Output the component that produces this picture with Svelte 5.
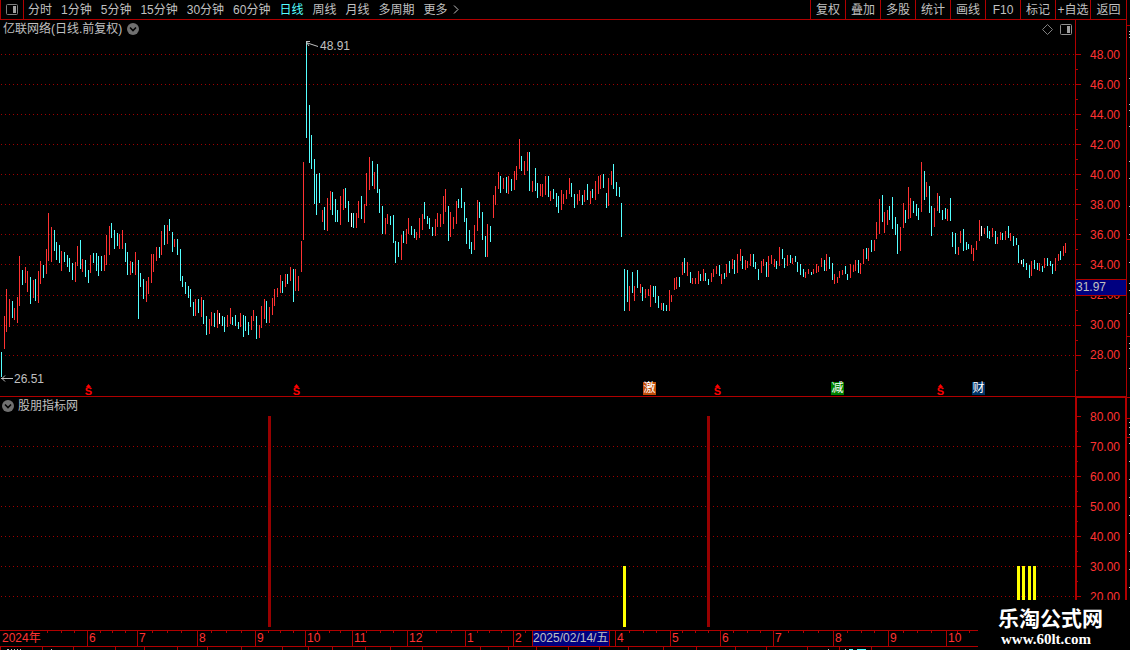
<script lang="ts">
	const periods = ["分时", "1分钟", "5分钟", "15分钟", "30分钟", "60分钟", "日线", "周线", "月线", "多周期", "更多"];
	const tools = ["复权", "叠加", "多股", "统计", "画线", "F10", "标记", "+自选", "返回"];
	let activePeriod = $state("日线");

	const PLOT_WIDTH = 1075;
	const left = (x: number) => (x / PLOT_WIDTH) * 100 + "%";

	// one bar per trading day: kind (r up, c down, w unchanged), x, high, low
	const raw = `
c1,352,377 r4,316,349 r6,289,332 r9,299,327 c12,301,318 r14,308,320 r17,297,323 r19,256,306 c22,270,285 r25,267,283
r27,271,292 c30,277,304 r33,280,298 c35,279,301 r38,271,303 r40,261,284 c43,265,278 r46,249,274 r48,213,261 r51,227,262
c54,230,251 c56,242,260 c59,245,263 r61,251,271 c64,252,262 c67,255,267 c69,258,272 c72,263,280 r75,262,282 r77,246,266
c80,240,269 r82,259,272 c85,260,277 c88,270,283 r90,255,273 c93,253,263 c96,253,271 c98,256,276 c101,256,271 r104,255,271
r106,235,265 r109,226,255 c111,223,238 c114,230,249 c117,233,246 r119,234,249 r122,230,249 c125,243,262 c127,252,275
r130,261,275 c132,262,273 r135,252,275 c138,260,319 c140,273,287 c143,279,299 r146,281,302 r148,277,294 r151,254,283
r153,254,272 r156,247,261 c159,247,258 r161,231,255 c164,225,245 r167,225,244 c169,219,231 c172,232,252 r174,239,247
c177,239,255 c180,249,281 c182,276,287 c185,282,294 c188,286,298 c190,289,307 c193,302,316 r195,299,316 c198,299,313
r201,297,317 c203,300,324 c206,316,335 r209,319,334 r211,312,326 c214,313,327 r217,310,328 w219,313,324 c222,316,326
c224,317,332 r227,315,327 r230,308,324 c232,317,325 c235,315,326 c238,322,329 r240,313,327 c243,315,337 c245,316,331
c248,322,335 r251,316,330 r253,310,321 c256,316,339 r259,325,338 r261,306,328 r264,299,319 c266,301,323 r269,307,323
r272,298,315 r274,289,306 r277,288,297 r280,275,293 c282,281,293 r285,274,287 c287,274,284 r290,267,281 c293,269,302
r295,269,291 r298,276,291 r301,241,272 r303,162,240 c306,41,138 c309,105,163 c311,135,169 c314,159,204 c316,174,215
c319,173,203 r322,210,222 c324,207,230 r327,198,231 r330,191,210 c332,192,215 c335,199,222 c337,210,222 r340,196,225
r343,189,210 c345,188,208 c348,201,222 w351,213,227 c353,213,228 r356,213,228 r358,201,218 c361,196,219 r364,204,223
r366,173,206 r369,157,190 c372,161,186 r374,172,189 c377,164,193 c379,189,213 c382,206,234 r385,218,234 r387,214,224
c390,216,225 c393,215,243 c395,241,263 c398,242,257 r401,235,260 c403,231,243 r406,229,244 r408,218,234 c411,226,235
c414,229,238 r416,232,240 r419,218,238 r422,214,230 c424,202,219 c427,216,224 c429,218,229 c432,227,236 r435,219,236
r437,213,227 r440,214,227 r443,196,224 r445,189,212 c448,206,241 r450,212,237 r453,217,229 r456,201,224 c458,199,208
c461,188,208 c464,202,222 c466,218,244 c469,230,249 c471,242,254 r474,225,250 r477,200,231 c479,202,218 c482,212,240
c485,236,257 r487,224,257 c490,226,242 r493,195,218 r495,186,205 r498,172,189 c500,176,193 r503,178,189 c506,177,193
r508,176,194 c511,179,191 r514,171,190 r516,166,180 r519,139,169 c521,156,171 r524,161,175 r527,152,171 c529,152,191
r532,181,192 c535,168,191 c537,183,198 r540,184,196 r542,184,197 r545,176,195 c548,176,197 r550,191,201 c553,189,199
c556,193,207 c558,196,213 r561,190,210 r563,194,204 r566,190,199 r569,178,194 c571,183,197 c574,194,208 r577,194,205
r579,190,201 c582,195,205 r584,190,202 c587,184,200 r590,191,204 c592,189,198 r595,181,200 r598,176,194 r600,175,189
c603,174,188 c606,193,208 r608,178,206 r611,171,185 c613,164,189 c616,182,196 c619,187,197 c621,203,237 c624,269,311
c627,270,302 r629,286,311 c632,272,293 r634,286,301 c637,270,288 r640,284,293 c642,287,301 r645,289,298 r648,289,296
r650,285,307 c653,286,297 c655,286,303 c658,296,308 r661,303,310 c663,303,311 c666,305,311 r669,290,311 r671,295,302
r674,278,290 r676,277,289 c679,277,287 r682,262,275 c684,258,273 r687,262,276 c690,272,283 r692,278,284 r695,278,284
r698,271,284 c700,274,281 r703,269,281 c705,273,281 c708,279,285 r711,273,282 r713,269,277 r716,266,274 c719,265,276
r721,274,284 c724,273,279 r726,264,277 c729,261,273 r732,259,269 c734,260,274 r737,254,273 r740,249,261 c742,256,269
r745,260,270 r747,261,268 r750,254,266 c753,254,267 c755,262,269 c758,269,280 r761,261,273 r763,259,266 c766,262,277
r768,256,277 r771,255,264 r774,259,267 c776,261,269 r779,247,266 c782,249,259 c784,258,268 r787,255,266 c790,255,263
r792,258,264 c795,256,262 c797,262,272 c800,264,275 c803,269,277 r805,272,278 r808,269,274 c811,272,275 r813,269,274
r816,264,273 r818,266,272 r821,258,267 c824,260,271 r826,254,271 c829,257,269 c832,263,280 r834,274,284 r837,277,283
r839,271,278 r842,270,275 c845,266,274 c847,274,280 r850,264,278 r853,265,272 r855,260,271 c858,260,273 r860,263,274
r863,249,264 c866,248,259 r868,248,261 c871,240,252 r874,240,251 r876,222,239 r879,199,234 c882,195,222 r884,212,233
r887,210,225 c889,206,220 c892,197,229 c895,217,235 c897,224,254 r900,227,251 r903,203,228 c905,210,223 r908,187,219
r910,198,218 c913,201,213 c916,204,216 c918,208,220 r921,162,212 c924,171,200 r926,182,197 c929,186,213 c931,206,236
r934,208,227 r937,193,211 c939,196,213 c942,210,220 c945,208,219 r947,209,221 c950,198,221 c952,232,247 c955,233,254
r958,247,255 r960,231,243 c963,229,251 c966,242,250 c968,244,249 r971,245,254 r973,248,261 r976,241,250 r979,220,241
w981,226,236 r984,228,234 c987,226,238 c989,231,239 r992,228,237 c995,231,244 r997,237,244 r1000,232,240 c1002,233,240
r1005,231,240 c1008,226,238 r1010,233,241 c1013,236,246 c1016,238,245 c1018,245,263 w1021,260,264 c1023,259,267
c1026,263,270 c1029,265,278 r1031,261,276 c1034,260,269 c1037,263,270 r1039,263,271 c1042,266,272 r1044,258,268
c1047,258,266 c1050,261,266 c1052,264,274 r1055,258,271 r1058,254,261 c1060,251,260 r1063,246,256 r1065,243,253`;
	const candles = raw
		.trim()
		.split(/\s+/)
		.map((item) => {
			const [x, high, low] = item.slice(1).split(",").map(Number);
			return { kind: item[0], x, high, low };
		});

	const priceLines = [54, 84, 114, 144, 174, 204, 234, 264, 295, 325, 355];
	const prices = ["48.00", "46.00", "44.00", "42.00", "40.00", "38.00", "36.00", "34.00", "32.00", "30.00", "28.00"];

	const levelLines = [416, 446, 476, 506, 536, 566, 596];
	const levels = ["80.00", "70.00", "60.00", "50.00", "40.00", "30.00", "20.00"];
	const signals = [
		{ x: 268, top: 416, color: "#980000" },
		{ x: 707, top: 416, color: "#980000" },
		{ x: 623, top: 566, color: "#ffff00" },
		{ x: 1017, top: 566, color: "#ffff00" },
		{ x: 1022, top: 566, color: "#ffff00" },
		{ x: 1028, top: 566, color: "#ffff00" },
		{ x: 1033, top: 566, color: "#ffff00" },
	];

	const dividends = [88, 296, 717, 940];
	const badges = [
		{ x: 643, text: "激", color: "#c04c08" },
		{ x: 831, text: "减", color: "#008000" },
		{ x: 972, text: "财", color: "#003468" },
	];

	const months = [
		{ x: 87, text: "6" },
		{ x: 137, text: "7" },
		{ x: 197, text: "8" },
		{ x: 255, text: "9" },
		{ x: 305, text: "10" },
		{ x: 352, text: "11" },
		{ x: 407, text: "12" },
		{ x: 465, text: "1" },
		{ x: 513, text: "2" },
		{ x: 615, text: "4" },
		{ x: 670, text: "5" },
		{ x: 720, text: "6" },
		{ x: 773, text: "7" },
		{ x: 833, text: "8" },
		{ x: 888, text: "9" },
		{ x: 946, text: "10" },
	];
	const weekTicks = [
		47, 61, 74, 100, 112, 125, 152, 167, 181, 211, 226, 241, 268, 280, 293, 317, 329, 340, 366, 380, 393, 422, 436,
		451, 477, 489, 501, 525, 629, 643, 656, 682, 695, 708, 733, 747, 760, 788, 803, 818, 847, 861, 874, 903, 917,
		931, 957, 969,
	];
	const tabEdges = [
		0, 42, 73, 115, 144, 177, 207, 241, 282, 308, 332, 365, 390, 422, 480, 508, 536, 568, 599, 628, 663, 696, 735,
		766, 807, 839, 871,
	];
	const sideLines = [25, 239, 336, 397, 418, 437];
	const sideMarks = [
		31, 34, 37, 78, 104, 110, 126, 161, 178, 206, 234, 262, 283, 290, 313, 343, 348, 368, 422, 427, 434, 443, 461,
		479, 497, 515, 533, 551, 569, 587,
	];
</script>

{#snippet collapseIcon()}
	<svg width="12" height="12" viewBox="0 0 12 12">
		<circle cx="6" cy="6" r="6" fill="#707070" />
		<path d="M3 4.5 6 7.5 9 4.5" fill="none" stroke="#000" stroke-width="1.6" />
	</svg>
{/snippet}

<div class="app">
	<div class="workspace">
		<header>
			<button class="panel-toggle" aria-label="侧栏">
				<svg width="12" height="11" viewBox="0 0 12 11">
					<rect x=".5" y=".5" width="11" height="10" rx="1" fill="none" stroke="#808080" />
					<rect x="7" y="2" width="3" height="7" fill="#a0a0a0" />
				</svg>
			</button>
			<nav>
				{#each periods as period}
					<button class:active={period === activePeriod} onclick={() => (activePeriod = period)}>{period}</button>
				{/each}
				<svg class="more" width="6" height="9" viewBox="0 0 6 9">
					<path d="M1 .5 5 4.5 1 8.5" fill="none" stroke="#c0c0c0" />
				</svg>
			</nav>
			<div class="tools">
				{#each tools as tool}
					<button>{tool}</button>
				{/each}
			</div>
		</header>

		<section class="row price">
			<div class="plot">
				<svg class="canvas" viewBox="0 20 1075 376" preserveAspectRatio="none" shape-rendering="crispEdges">
					{#each priceLines as y}
						<path class="grid" d="M1 {y + 0.5}H1075" />
					{/each}
					{#each candles as c}
						<rect class={c.kind} x={c.x} y={c.high} width="1" height={c.low - c.high} />
					{/each}
				</svg>
				<div class="title">
					<span>亿联网络(日线.前复权)</span>
					<button aria-label="展开">{@render collapseIcon()}</button>
				</div>
				<div class="corner">
					<button aria-label="标记">
						<svg width="11" height="11" viewBox="0 0 11 11">
							<path d="M5.5 .5 10.5 5.5 5.5 10.5 .5 5.5Z" fill="none" stroke="#808080" />
						</svg>
					</button>
					<button aria-label="分栏">
						<svg width="12" height="11" viewBox="0 0 12 11">
							<rect x=".5" y=".5" width="11" height="10" rx="1" fill="none" stroke="#909090" />
							<rect x="7" y="2" width="3" height="7" fill="#a0a0a0" />
						</svg>
					</button>
				</div>
				<div class="extreme high" style="left: {left(306)}">
					<svg width="12" height="7" viewBox="0 0 12 7">
						<path d="M0 1.5 12 5.5M0 6V1M0 .5H4M1 2 3 5" fill="none" stroke="#c0c0c0" />
					</svg>
					48.91
				</div>
				<div class="extreme low" style="left: {left(1)}">
					<svg width="12" height="7" viewBox="0 0 12 7">
						<path d="M0 3.5H12M4 .5 1 3.5 4 6.5" fill="none" stroke="#c0c0c0" />
					</svg>
					26.51
				</div>
				{#each dividends as x}
					<span class="dividend" style="left: {left(x)}">
						<svg width="5" height="3" viewBox="0 0 5 3"><path d="M2.5 0 5 3H0Z" fill="#f00" /></svg>
						<b>S</b>
					</span>
				{/each}
				{#each badges as badge}
					<span class="badge" style="left: {left(badge.x)}; background: {badge.color}">{badge.text}</span>
				{/each}
			</div>
			<div class="axis">
				<svg class="ticks" width="5" height="376" viewBox="0 20 5 376" shape-rendering="crispEdges">
					{#each priceLines as y}
						<path d="M0 {y + 0.5}H5M0 {y + 15.5}H2" stroke="#b00000" />
					{/each}
				</svg>
				<div class="values">
					{#each prices as price}
						<span>{price}</span>
					{/each}
				</div>
				<div class="cursor-price">31.97</div>
			</div>
		</section>

		<section class="row indicator">
			<div class="plot">
				<svg class="canvas" viewBox="0 397 1075 233" preserveAspectRatio="none" shape-rendering="crispEdges">
					{#each levelLines.slice(1) as y}
						<path class="grid" d="M1 {y + 0.5}H1075" />
					{/each}
					{#each signals as s}
						<rect x={s.x} y={s.top} width="3" height={627 - s.top} fill={s.color} />
					{/each}
				</svg>
				<div class="title">
					<button aria-label="展开">{@render collapseIcon()}</button>
					<span>股朋指标网</span>
				</div>
			</div>
			<div class="axis">
				<svg class="ticks" width="5" height="232" viewBox="0 398 5 232" shape-rendering="crispEdges">
					{#each levelLines as y}
						<path d="M0 {y + 0.5}H4M0 {y + 15.5}H1" stroke="#b00000" />
					{/each}
				</svg>
				<div class="values">
					{#each levels as level}
						<span>{level}</span>
					{/each}
				</div>
			</div>
		</section>

		<footer>
			<div class="timeline">
				<span class="year">2024年</span>
				{#each weekTicks as x}
					<i style="left: {left(x)}"></i>
				{/each}
				{#each months as month}
					<span class="month" style="left: {left(month.x)}">{month.text}</span>
				{/each}
				<span class="cursor-date" style="left: {left(532)}">2025/02/14/五</span>
			</div>
			<svg class="tabs" viewBox="0 0 1126 3" preserveAspectRatio="none" shape-rendering="crispEdges">
				{#each tabEdges as x}
					<rect {x} y="0" width="1" height="3" fill="#b00000" />
				{/each}
				<path d="M7 2.5h2M11 2.5h1M14 2.5h1M17 2.5h1M20 2.5h1M51 2.5h1M828 2.5h1M845 2.5h1" stroke="#c0c0c0" />
				<path d="M849 2.5h4M857 2.5h9" stroke="#54ffff" />
			</svg>
		</footer>
	</div>

	<aside>
		<svg width="3" height="650" viewBox="0 0 3 650" shape-rendering="crispEdges">
			{#each sideLines as y}
				<rect x="0" {y} width="3" height="1" fill="#b00000" />
			{/each}
			{#each sideMarks as y}
				<rect x="2" {y} width="1" height="1" fill="#c0c0c0" />
			{/each}
		</svg>
	</aside>

	<div class="watermark">
		<strong>乐淘公式网</strong>
		<a href="http://www.60lt.com">www.60lt.com</a>
	</div>
</div>

<style>
	:global(body) {
		margin: 0;
		background: #000;
	}
	.app {
		position: relative;
		display: flex;
		background: #000;
		color: #c0c0c0;
		font: 12px/16px "Liberation Sans", "Noto Sans CJK SC", sans-serif;
		overflow: hidden;
	}
	.workspace {
		flex: 1;
		min-width: 0;
	}
	button {
		display: flex;
		align-items: center;
		justify-content: center;
		padding: 0;
		border: 0;
		background: none;
		color: inherit;
		font: inherit;
		white-space: nowrap;
		cursor: pointer;
	}
	svg {
		display: block;
		flex: none;
	}

	header {
		display: flex;
		height: 19px;
		border-bottom: 1px solid #b00000;
	}
	.panel-toggle {
		width: 24px;
		box-sizing: border-box;
		border-left: 1px solid #b00000;
		border-right: 1px solid #b00000;
	}
	nav {
		display: flex;
		flex: 1;
		align-items: center;
		gap: 9px;
		padding-left: 4px;
	}
	nav .active {
		color: #54ffff;
	}
	nav .more {
		margin-left: -4px;
	}
	.tools {
		display: flex;
	}
	.tools button {
		width: 35px;
		box-sizing: border-box;
		border-left: 1px solid #b00000;
	}
	.tools button:last-child {
		width: 36px;
	}

	.row {
		display: flex;
	}
	.plot {
		position: relative;
		flex: 1;
		min-width: 0;
	}
	.canvas {
		width: 100%;
	}
	.price .canvas {
		height: 376px;
	}
	.indicator .canvas {
		height: 233px;
	}
	.price {
		border-bottom: 1px solid #b00000;
	}
	.grid {
		stroke: #a00000;
		stroke-dasharray: 1 3;
	}
	.r {
		fill: #ff3232;
	}
	.c {
		fill: #54ffff;
	}
	.w {
		fill: #fff;
	}

	.title {
		position: absolute;
		top: 0;
		left: 2px;
		display: flex;
		align-items: center;
		gap: 4px;
		height: 18px;
	}
	.price .title {
		left: 3px;
		gap: 5px;
	}
	.corner {
		position: absolute;
		top: 4px;
		right: 3px;
		display: flex;
		gap: 7px;
	}
	.extreme {
		position: absolute;
		display: flex;
		gap: 2px;
	}
	.extreme.high {
		top: 18px;
	}
	.extreme.high svg {
		margin-top: 3px;
	}
	.extreme.low {
		top: 351px;
		gap: 1px;
	}
	.extreme.low svg {
		margin-top: 4px;
	}
	.dividend {
		position: absolute;
		bottom: 0;
		display: flex;
		flex-direction: column;
		align-items: center;
		width: 7px;
		margin-left: -3px;
		color: #f00;
		font-size: 11px;
		line-height: 9px;
	}
	.badge {
		position: absolute;
		bottom: 1px;
		width: 13px;
		height: 13px;
		color: #fff;
		font-size: 12px;
		line-height: 13px;
		text-align: center;
	}

	.axis {
		position: relative;
		width: 51px;
		box-sizing: border-box;
		border-left: 1px solid #b00000;
		color: #ff3232;
	}
	.ticks {
		position: absolute;
		top: 0;
		left: 0;
	}
	.values {
		display: flex;
		flex-direction: column;
		padding: 20px 0 0 14px;
	}
	.values span {
		line-height: 30px;
	}
	.indicator .axis {
		border-left-width: 2px;
		border-top: 1px solid #b00000;
		border-right: 1px solid #b00000;
	}
	.indicator .values {
		height: 210px;
		padding: 4px 0 0 13px;
	}
	.cursor-price {
		position: absolute;
		top: 259px;
		left: 0;
		right: 0;
		border-top: 1px solid #b00000;
		border-bottom: 1px solid #b00000;
		background: #000080;
		color: #c0c0c0;
		line-height: 15px;
	}

	.timeline {
		position: relative;
		height: 15px;
		margin-right: 51px;
		color: #ff3232;
		line-height: 15px;
	}
	footer {
		border-top: 1px solid #b00000;
	}
	.year {
		padding-left: 2px;
	}
	.timeline i {
		position: absolute;
		top: 0;
		width: 1px;
		height: 2px;
		background: #b00000;
	}
	.month {
		position: absolute;
		top: 0;
		padding-left: 1px;
		border-left: 1px solid #b00000;
	}
	.cursor-date {
		position: absolute;
		top: 0;
		padding-right: 1px;
		border-left: 1px solid #b00000;
		border-right: 1px solid #b00000;
		background: #000080;
		color: #c0c0c0;
		white-space: nowrap;
	}
	.tabs {
		width: 100%;
		height: 3px;
		border-top: 1px solid #b00000;
	}

	aside {
		width: 3px;
		border-left: 1px solid #b00000;
	}
	.watermark {
		position: absolute;
		right: 0;
		bottom: 0;
		display: flex;
		flex-direction: column;
		box-sizing: border-box;
		width: 152px;
		height: 50px;
		padding: 6px 0 0 20px;
		background: #000;
		color: #fff;
	}
	.watermark strong {
		font-size: 21px;
		line-height: 26px;
	}
	.watermark a {
		padding-left: 3px;
		color: #fff;
		font: bold 15px/15px "Liberation Serif", serif;
		text-decoration: none;
	}
</style>
